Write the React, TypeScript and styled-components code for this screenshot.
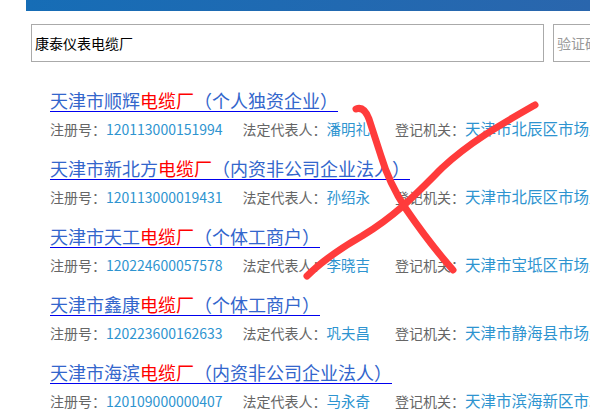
import React from "react";
import styled, { createGlobalStyle } from "styled-components";

const GlobalStyle = createGlobalStyle`
  html, body {
    margin: 0;
    padding: 0;
    background: #fff;
  }
  body {
    width: 590px;
    height: 411px;
    overflow: hidden;
    font-family: "Noto Sans CJK SC", "Noto Sans", sans-serif;
  }
`;

const Page = styled.div`
  position: relative;
  width: 590px;
  height: 411px;
  overflow: hidden;
`;

const TopBar = styled.div`
  margin-left: 26px;
  height: 11px;
  background: linear-gradient(to right, #166db6, #2a66ad);
`;

const SearchRow = styled.div`
  display: flex;
  gap: 9px;
  margin-top: 13px;
  padding-left: 31px;
`;

const SearchBox = styled.div<{ $width: number; $muted?: boolean }>`
  flex: none;
  box-sizing: border-box;
  width: ${({ $width }) => $width}px;
  height: 38px;
  border: 1px solid #aaa;
  display: flex;
  align-items: center;
  padding-left: 3px;
  font-size: 14px;
  color: ${({ $muted }) => ($muted ? "#999" : "#000")};
  white-space: nowrap;
  overflow: hidden;
`;

const ResultList = styled.ul`
  list-style: none;
  margin: 26px 0 0;
  padding: 0 0 0 50px;
`;

const ResultItem = styled.li`
  margin-bottom: 18px;
`;

const Title = styled.a`
  display: inline-block;
  height: 24px;
  line-height: 24px;
  font-size: 18px;
  color: #3366cc;
  text-decoration: underline;
  text-decoration-color: #0000ee;
  text-underline-offset: 3px;
  white-space: nowrap;
`;

const Hit = styled.span`
  color: #ff0000;
`;

const Meta = styled.div`
  margin-top: 5px;
  height: 20px;
  line-height: 20px;
  font-size: 14px;
  white-space: nowrap;
  overflow: hidden;
`;

const Field = styled.span<{ $gap: number }>`
  margin-right: ${({ $gap }) => $gap}px;
`;

const Label = styled.span`
  color: #666;
`;

const Value = styled.span<{ $size?: number }>`
  color: #2e94d0;
  font-size: ${({ $size }) => $size ?? 14}px;
`;

const Scribble = styled.svg`
  position: absolute;
  left: 0;
  top: 0;
  pointer-events: none;
`;

type Company = {
  prefix: string;
  kind: string;
  reg: string;
  person: string;
  office: string;
};

const companies: Company[] = [
  { prefix: "天津市顺辉", kind: "（个人独资企业）", reg: "120113000151994", person: "潘明礼", office: "天津市北辰区市场监督管理局" },
  { prefix: "天津市新北方", kind: "（内资非公司企业法人）", reg: "120113000019431", person: "孙绍永", office: "天津市北辰区市场监督管理局" },
  { prefix: "天津市天工", kind: "（个体工商户）", reg: "120224600057578", person: "李晓吉", office: "天津市宝坻区市场监督管理局" },
  { prefix: "天津市鑫康", kind: "（个体工商户）", reg: "120223600162633", person: "巩夫昌", office: "天津市静海县市场监督管理局" },
  { prefix: "天津市海滨", kind: "（内资非公司企业法人）", reg: "120109000000407", person: "马永奇", office: "天津市滨海新区市场监督管理局" },
];

export default function App() {
  return (
    <Page>
      <GlobalStyle />
      <TopBar />
      <SearchRow>
        <SearchBox $width={513}>康泰仪表电缆厂</SearchBox>
        <SearchBox $width={120} $muted>
          验证码
        </SearchBox>
      </SearchRow>
      <ResultList>
        {companies.map((c) => (
          <ResultItem key={c.reg}>
            <Title href="#">
              {c.prefix}
              <Hit>电缆厂</Hit>
              {c.kind}
            </Title>
            <Meta>
              <Field $gap={20}>
                <Label>注册号：</Label>
                <Value>{c.reg}</Value>
              </Field>
              <Field $gap={25}>
                <Label>法定代表人：</Label>
                <Value $size={14.5}>{c.person}</Value>
              </Field>
              <Field $gap={0}>
                <Label>登记机关：</Label>
                <Value $size={15.5}>{c.office}</Value>
              </Field>
            </Meta>
          </ResultItem>
        ))}
      </ResultList>
      <Scribble width="590" height="411" viewBox="0 0 590 411">
        <g fill="none" stroke="#ff3b3b" strokeWidth="7" strokeLinecap="round" strokeLinejoin="round">
          <path d="M356,109 Q364,106 369,119 L381,156 Q389,183 406,209 Q430,244 453,270" />
          <path d="M535,105 C500,125 470,142 442,168 C418,192 398,214 362,236 C336,251 320,263 307,276" />
        </g>
      </Scribble>
    </Page>
  );
}
